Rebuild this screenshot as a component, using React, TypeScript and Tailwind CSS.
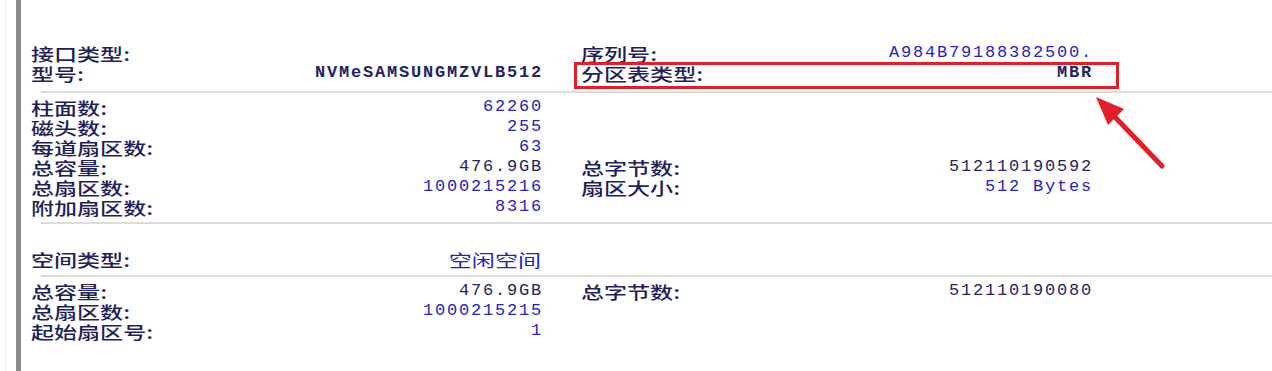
import React from 'react';

type Cell = { label: string; value: string; tone?: 'blue' | 'dark'; bold?: boolean };
type Row = { left?: Cell; right?: Cell };

const cjk = '"Noto Sans CJK SC", "Noto Sans", sans-serif';
const mono = '"Liberation Mono", "DejaVu Sans Mono", monospace';

function Label({ text }: { text: string }) {
  return (
    <span
      className="inline-block origin-left scale-x-[1.44] scale-y-[1.1] text-[16px] leading-[18px] font-medium text-[#1f1f5c]"
      style={{ fontFamily: cjk }}
    >
      {text}:
    </span>
  );
}

function Value({ cell }: { cell: Cell }) {
  const color = cell.tone === 'dark' ? 'text-[#24245e]' : 'text-[#2323c8]';
  const isCjk = /[\u4e00-\u9fff]/.test(cell.value);
  if (isCjk) {
    return (
      <span
        className="inline-block origin-right scale-x-[1.44] scale-y-[1.1] text-[16px] leading-[18px] text-[#2323c8]"
        style={{ fontFamily: cjk }}
      >
        {cell.value}
      </span>
    );
  }
  return (
    <span
      className={`-mr-[2px] text-[17px] leading-[18px] tracking-[1.8px] whitespace-pre ${color} ${
        cell.bold ? 'font-bold' : ''
      }`}
      style={{ fontFamily: mono }}
    >
      {cell.value}
    </span>
  );
}

function Half({ cell }: { cell?: Cell }) {
  return (
    <div className="flex h-[20px] w-[510px] items-center justify-between">
      {cell ? (
        <>
          <Label text={cell.label} />
          <Value cell={cell} />
        </>
      ) : null}
    </div>
  );
}

function Rows({ rows }: { rows: Row[] }) {
  return (
    <div className="flex flex-col pl-[10px]">
      {rows.map((r, i) => (
        <div key={i} className="flex gap-[40px]">
          <Half cell={r.left} />
          <Half cell={r.right} />
        </div>
      ))}
    </div>
  );
}

function Divider() {
  return <div className="ml-[20px] h-[2px] bg-[#dcdcdc]" />;
}

const disk: Row[] = [
  { left: { label: '接口类型', value: '' }, right: { label: '序列号', value: 'A984B79188382500.' } },
  {
    left: { label: '型号', value: 'NVMeSAMSUNGMZVLB512', tone: 'dark', bold: true },
    right: { label: '分区表类型', value: 'MBR', tone: 'dark', bold: true },
  },
];

const geometry: Row[] = [
  { left: { label: '柱面数', value: '62260' } },
  { left: { label: '磁头数', value: '255' } },
  { left: { label: '每道扇区数', value: '63' } },
  {
    left: { label: '总容量', value: '476.9GB', tone: 'dark' },
    right: { label: '总字节数', value: '512110190592', tone: 'dark' },
  },
  { left: { label: '总扇区数', value: '1000215216' }, right: { label: '扇区大小', value: '512 Bytes' } },
  { left: { label: '附加扇区数', value: '8316' } },
];

const space: Row[] = [
  {
    left: { label: '总容量', value: '476.9GB', tone: 'dark' },
    right: { label: '总字节数', value: '512110190080', tone: 'dark' },
  },
  { left: { label: '总扇区数', value: '1000215215' } },
  { left: { label: '起始扇区号', value: '1' } },
];

export default function App() {
  return (
    <div className="relative flex h-[371px] w-[1272px] overflow-hidden bg-white">
      {/* window edge */}
      <div className="ml-[5px] w-px bg-[#f3efdc]" />
      <div className="ml-[10px] w-[5px] bg-[#8c8c8c]" />

      <div className="flex flex-1 flex-col pt-[43px]">
        <Rows rows={disk} />
        <div className="mt-[8px]">
          <Divider />
        </div>
        <div className="pt-[4px]">
          <Rows rows={geometry} />
        </div>
        <div className="mt-[5px]">
          <Divider />
        </div>
        <div className="pt-[25px]">
          <Rows rows={[{ left: { label: '空间类型', value: '空闲空间' } }]} />
        </div>
        <div className="mt-[6px]">
          <Divider />
        </div>
        <div className="pt-[4px]">
          <Rows rows={space} />
        </div>
      </div>

      {/* annotation */}
      <div className="absolute left-[574px] top-[62px] h-[27px] w-[545px] border-[3px] border-[#e41e26]" />
      <svg className="absolute left-0 top-0" width="1272" height="371" viewBox="0 0 1272 371">
        <line x1="1162" y1="166" x2="1113" y2="115" stroke="#e41e26" strokeWidth="5" strokeLinecap="round" />
        <polygon points="1096,97 1124,109 1108,125" fill="#e41e26" />
      </svg>
    </div>
  );
}
